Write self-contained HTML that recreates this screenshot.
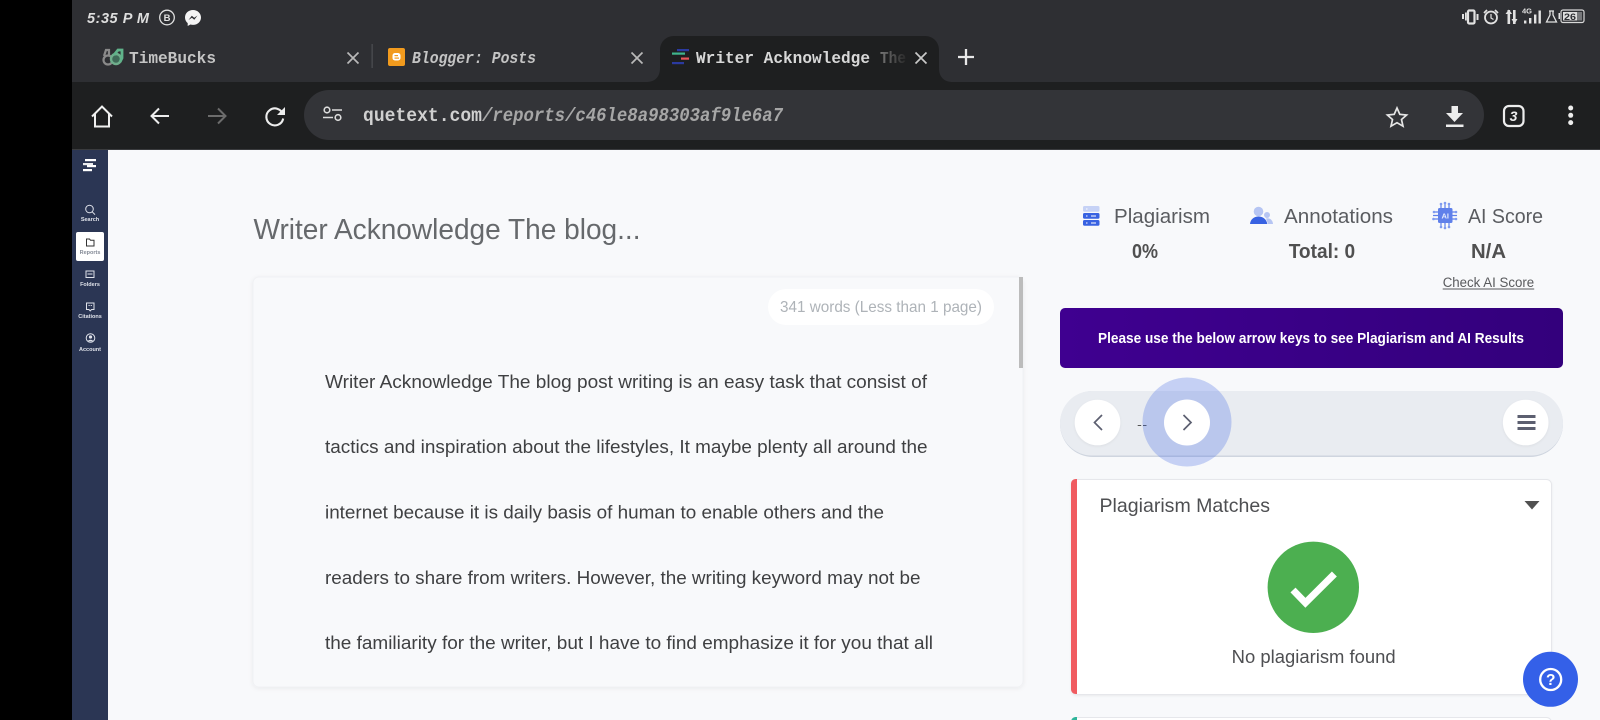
<!DOCTYPE html>
<html lang="en">
<head>
<meta charset="utf-8">
<title>Writer Acknowledge The blog...</title>
<style>
html,body{margin:0;padding:0;background:#000;width:1600px;height:720px;overflow:hidden}
svg{display:block}
text{font-family:"Liberation Sans",sans-serif}
.tab{font-family:"Liberation Mono","Liberation Sans",sans-serif;font-weight:700;font-size:17px;fill:#c4c4c4}
.side{font-size:5.5px;fill:#e0e3ea;text-anchor:middle;font-weight:700}
.stat{font-size:20.5px;fill:#5a5c60}
.val{font-size:20px;font-weight:700;fill:#505050}
.body{font-size:18.5px;fill:#3f4042}
</style>
</head>
<body>
<svg width="1600" height="720" viewBox="0 0 1600 720" xmlns="http://www.w3.org/2000/svg">
<defs>
<linearGradient id="fade" gradientUnits="userSpaceOnUse" x1="872" x2="906" y1="0" y2="0">
<stop offset="0" stop-color="#8d8d8d"/><stop offset="1" stop-color="#2a2a2a"/>
</linearGradient>
<linearGradient id="ban" x1="0" x2="1" y1="0" y2="0">
<stop offset="0" stop-color="#3f0090"/><stop offset="1" stop-color="#33007c"/>
</linearGradient>
<filter id="sh" x="-5%" y="-5%" width="110%" height="110%">
<feDropShadow dx="0" dy="1" stdDeviation="2" flood-color="#000" flood-opacity=".06"/>
</filter>
<filter id="sh2" x="-20%" y="-20%" width="140%" height="140%">
<feDropShadow dx="0" dy="1" stdDeviation="1.200" flood-color="#000" flood-opacity=".06"/>
</filter>
</defs>

<!-- frame -->
<rect width="1600" height="720" fill="#000"/>
<rect x="72" y="0" width="1528" height="82" fill="#2e2f33"/>
<rect x="72" y="82" width="1528" height="67" fill="#1e1f20"/>
<rect x="72" y="149" width="1528" height="1" fill="#3a3b3e"/>
<rect x="108" y="150" width="1492" height="570" fill="#f8f9fb"/>
<rect x="72" y="150" width="36" height="570" fill="#2b3654"/>

<!-- status bar -->
<text x="87" y="23" font-size="14.5" font-weight="700" font-style="italic" fill="#dedede" textLength="62" lengthAdjust="spacing">5:35 P M</text>
<circle cx="167" cy="17.5" r="7.3" fill="none" stroke="#e0e0e0" stroke-width="1.3"/>
<text x="167" y="21" font-size="9.5" font-weight="700" fill="#e0e0e0" text-anchor="middle">B</text>
<path d="M193 10c-4.600 0-8 3.300-8 7.500 0 2.300 1 4.300 2.700 5.600v2.900l2.700-1.500c.8.200 1.700.4 2.600.4 4.600 0 8-3.300 8-7.400s-3.400-7.500-8-7.500z" fill="#f4f4f4"/>
<path d="M188.500 20l3.300-4.200 2.400 2 3.300-2.300-3.200 4.200-2.400-2z" fill="#2e2f33"/>

<!-- right status icons -->
<g fill="#e2e2e2" stroke="none">
<rect x="1468" y="10.500" width="6.500" height="13" rx="1.200" fill="none" stroke="#e2e2e2" stroke-width="2.200"/>
<rect x="1462" y="14" width="2" height="5"/><rect x="1465" y="12.500" width="1.800" height="8"/>
<rect x="1476.500" y="14" width="2" height="6"/>
<circle cx="1491" cy="17.500" r="6" fill="none" stroke="#e2e2e2" stroke-width="1.800"/>
<path d="M1491 14v4l2.500 1.500" fill="none" stroke="#e2e2e2" stroke-width="1.200"/>
<path d="M1484 13l3-3M1498 13l-3-3" fill="none" stroke="#e2e2e2" stroke-width="1.700"/>
<rect x="1507.500" y="10" width="2.600" height="14"/><path d="M1505.500 14l3.300-4.500 3.300 4.500z"/>
<rect x="1513" y="10" width="2.600" height="14"/><path d="M1511.500 19h6l-3 5z"/>
<text x="1522" y="13.500" font-size="7.500" font-weight="700" fill="#e2e2e2">4G</text>
<rect x="1524" y="20.500" width="2.400" height="3"/><rect x="1529" y="18" width="2.400" height="5.500"/><rect x="1534" y="14.500" width="2.400" height="9"/><rect x="1538.500" y="10.500" width="2.400" height="13"/>
<path d="M1549 11h5M1550 11v4l-3.500 7h10l-3.500-7v-4" fill="none" stroke="#e2e2e2" stroke-width="1.300"/>
<rect x="1558.500" y="13" width="1.500" height="6"/>
<rect x="1561" y="10" width="23" height="12.500" rx="2" fill="none" stroke="#d8d8d8" stroke-width="1.200"/>
<rect x="1563" y="12" width="14" height="8.500" fill="#dedede"/>
<rect x="1577" y="12" width="5" height="8.500" fill="#77787b"/>
<text x="1564" y="19.800" font-size="9" font-weight="700" fill="#2e2f33" textLength="12" lengthAdjust="spacingAndGlyphs">26</text>
</g>

<!-- tabs -->
<g fill="none">
<circle cx="108" cy="60" r="4.500" stroke="#8a8a8a" stroke-width="2.200"/>
<path d="M104 56l2-6h3v6" stroke="#8a8a8a" stroke-width="2.200"/>
<circle cx="116" cy="59" r="5" stroke="#6fae8c" stroke-width="2.400" fill="#3f6a58"/>
<path d="M114 55l4-5h4v8l-2 4" stroke="#5fb38a" stroke-width="2.800"/>
</g>
<text class="tab" x="129" y="63" textLength="87" lengthAdjust="spacingAndGlyphs">TimeBucks</text>
<path d="M347.500 52.500l11 11m0-11l-11 11" stroke="#b9b9b9" stroke-width="1.700" fill="none"/>
<rect x="371.500" y="44" width="1.300" height="24" fill="#4b4c50"/>
<rect x="388" y="48" width="17" height="18" rx="2" fill="#f29b1e"/>
<rect x="392.500" y="53" width="8" height="7.500" rx="2.500" fill="#fff"/>
<rect x="394.500" y="55" width="3.500" height="1.200" fill="#f29b1e"/><rect x="394.500" y="57.500" width="4.500" height="1.200" fill="#f29b1e"/>
<text class="tab" x="412" y="63" textLength="124" lengthAdjust="spacingAndGlyphs" font-style="italic">Blogger: Posts</text>
<path d="M631.500 52.500l11 11m0-11l-11 11" stroke="#b9b9b9" stroke-width="1.700" fill="none"/>

<!-- active tab -->
<path d="M646 82c9 0 14-5 14-14V50c0-8 6-14 14-14h251c8 0 14 6 14 14v18c0 9 5 14 14 14z" fill="#1e1f20"/>
<rect x="677" y="49" width="12" height="2.200" fill="#2b3aa0"/>
<rect x="672" y="52.500" width="13" height="2.200" fill="#3fb58c"/>
<rect x="681" y="57.500" width="8" height="2.200" fill="#e8555a"/>
<rect x="672" y="62" width="12" height="2.200" fill="#2b3aa0"/>
<text class="tab" x="696" y="63" textLength="174" lengthAdjust="spacingAndGlyphs" style="fill:#d8d8d8">Writer Acknowledge</text>
<text x="880" y="63" font-size="17" font-weight="700" fill="url(#fade)" textLength="26" lengthAdjust="spacingAndGlyphs" style="font-family:'Liberation Mono',monospace">The</text>
<path d="M915.500 52.500l11 11m0-11l-11 11" stroke="#c9c9c9" stroke-width="1.700" fill="none"/>
<path d="M966 49v16M958 57h16" stroke="#e8e8e8" stroke-width="2.300" fill="none"/>

<!-- toolbar -->
<path d="M92 116.500L102 106.500l10 10M95 114v12.500h14V114" fill="none" stroke="#f0f0f0" stroke-width="2"/>
<path d="M169 116h-17M159 108.500l-7.500 7.500 7.500 7.500" fill="none" stroke="#ededed" stroke-width="2"/>
<path d="M208 116h17M218 108.500l7.500 7.500-7.500 7.500" fill="none" stroke="#6c6c6c" stroke-width="2"/>
<path d="M283 114.500a8.500 8.500 0 1 0 .2 4" fill="none" stroke="#ededed" stroke-width="2.100"/>
<path d="M285 107v8h-8z" fill="#ededed"/>
<rect x="304" y="90" width="1180" height="50" rx="25" fill="#333438"/>
<g fill="none" stroke="#dcdcdc" stroke-width="1.600">
<circle cx="327" cy="110" r="2.800"/><path d="M332 110h10M323 117.500h10"/><circle cx="338" cy="117.500" r="2.800"/>
</g>
<text x="363" y="121" font-size="19" font-weight="700" fill="#d0d0d0" textLength="119" lengthAdjust="spacingAndGlyphs" style="font-family:'Liberation Mono',monospace">quetext.com</text>
<text x="482" y="121" font-size="19" font-weight="700" fill="#a6a6a6" textLength="301" lengthAdjust="spacingAndGlyphs" font-style="italic" style="font-family:'Liberation Mono',monospace">/reports/c46le8a98303af9le6a7</text>
<path d="M1397 108l2.800 6.300 6.800.7-5.100 4.500 1.500 6.700-6-3.500-6 3.500 1.500-6.700-5.100-4.500 6.800-.7z" fill="none" stroke="#e6e6e6" stroke-width="1.700"/>
<path d="M1451.500 106h6.500v7h5l-8.500 9-8.500-9h5.500z" fill="#ededed"/>
<rect x="1446" y="124.500" width="17.500" height="2.500" fill="#ededed"/>
<rect x="1504" y="106" width="19.500" height="20" rx="5" fill="none" stroke="#ededed" stroke-width="2.200"/>
<text x="1513.500" y="121" font-size="14" font-weight="700" font-style="italic" fill="#ededed" text-anchor="middle">3</text>
<circle cx="1570.700" cy="108" r="2.500" fill="#ededed"/><circle cx="1570.700" cy="115.300" r="2.500" fill="#ededed"/><circle cx="1570.700" cy="122.600" r="2.500" fill="#ededed"/>

<!-- sidebar -->
<g fill="#fff">
<rect x="85" y="159" width="11" height="2.200"/><rect x="83" y="163" width="10" height="2.200" opacity=".9"/>
<rect x="87" y="165" width="9" height="2.200"/><rect x="83" y="169" width="9" height="2.200"/>
</g>
<circle cx="89.500" cy="209" r="3.800" fill="none" stroke="#dfe2ea" stroke-width="1"/>
<path d="M92.200 211.800l2.800 2.800" stroke="#dfe2ea" stroke-width="1"/>
<text class="side" x="90" y="221">Search</text>
<rect x="76" y="232" width="28" height="29" rx="2" fill="#fff"/>
<path d="M86.500 239h3l1 1.200h3.500v5.800h-7.500z" fill="none" stroke="#333" stroke-width="1"/>
<text class="side" x="90" y="254" style="fill:#858b97">Reports</text>
<rect x="86" y="271" width="8" height="6.500" fill="none" stroke="#dfe2ea" stroke-width="1"/><path d="M87.500 274h5" stroke="#dfe2ea" stroke-width="1"/>
<text class="side" x="90" y="286">Folders</text>
<path d="M86.500 303h7.500v6.500h-2.500l-1.300 1.400-1.300-1.400h-2.400z" fill="none" stroke="#dfe2ea" stroke-width="1"/><path d="M88.500 305.500h1.200M90.700 305.500h1.200" stroke="#dfe2ea" stroke-width="1"/>
<text class="side" x="90" y="318">Citations</text>
<circle cx="90.500" cy="338" r="4.300" fill="none" stroke="#dfe2ea" stroke-width="1"/><circle cx="90.500" cy="337" r="1.600" fill="#dfe2ea"/><path d="M87.800 341.200c.6-2 4.800-2 5.400 0z" fill="#dfe2ea"/>
<text class="side" x="90" y="351">Account</text>

<!-- title -->
<text x="253.500" y="239" font-size="29" fill="#66696c" textLength="387" lengthAdjust="spacingAndGlyphs">Writer Acknowledge The blog...</text>

<!-- text panel -->
<rect x="253" y="277" width="770" height="410" rx="6" fill="#f8f9fb" stroke="#f0f1f4" stroke-width="1" filter="url(#sh)"/>
<rect x="1019" y="277" width="4" height="91" fill="#bcbcbc"/>
<rect x="768" y="289" width="226" height="36" rx="18" fill="#fff"/>
<text x="780" y="312" font-size="16" fill="#aeb3b8" textLength="202" lengthAdjust="spacingAndGlyphs">341 words (Less than 1 page)</text>
<text class="body" x="325" y="388" textLength="602" lengthAdjust="spacingAndGlyphs">Writer Acknowledge The blog post writing is an easy task that consist of</text>
<text class="body" x="325" y="453" textLength="602.500" lengthAdjust="spacingAndGlyphs">tactics and inspiration about the lifestyles, It maybe plenty all around the</text>
<text class="body" x="325" y="518.500" textLength="559" lengthAdjust="spacingAndGlyphs">internet because it is daily basis of human to enable others and the</text>
<text class="body" x="325" y="584" textLength="595.500" lengthAdjust="spacingAndGlyphs">readers to share from writers. However, the writing keyword may not be</text>
<text class="body" x="325" y="649" textLength="608" lengthAdjust="spacingAndGlyphs">the familiarity for the writer, but I have to find emphasize it for you that all</text>

<!-- stats -->
<rect x="1083" y="206" width="16.500" height="5.800" rx="1.500" fill="#c6d2f6"/>
<rect x="1083" y="213" width="16.500" height="5.800" rx="1.500" fill="#3862e2"/>
<rect x="1083" y="220" width="16.500" height="5.800" rx="1.500" fill="#3862e2"/>
<path d="M1086 209h1.500M1086 216h1.500M1086 223h1.500M1091 216h5M1091 223h5" stroke="#fff" stroke-width="1"/>
<text class="stat" x="1114" y="223" textLength="96" lengthAdjust="spacingAndGlyphs">Plagiarism</text>

<circle cx="1258.500" cy="211.500" r="4.800" fill="#b6c5f3"/>
<circle cx="1267" cy="215" r="3" fill="#b6c5f3"/>
<path d="M1266 218.500c4-1 6.800 2 7 5.500h-5z" fill="#b6c5f3"/>
<path d="M1250 224c.5-4.800 4-7.500 8.500-7.500s8 2.700 8.800 7.500z" fill="#3862e2"/>
<text class="stat" x="1284" y="223" textLength="109" lengthAdjust="spacingAndGlyphs">Annotations</text>

<g stroke="#5f80ea" stroke-width="1.200" fill="none">
<path d="M1441 208v-4M1445 208v-5M1449 208v-4M1441 223v4M1445 223v5M1449 223v4M1438 212h-4M1438 215.500h-5M1438 219h-4M1452 212h4M1452 215.500h5M1452 219h4"/>
</g>
<rect x="1438" y="208" width="14.500" height="15" rx="1.500" fill="#5f80ea"/>
<g fill="#7f9bf0"><circle cx="1441" cy="204" r="1.300"/><circle cx="1449" cy="204" r="1.300"/><circle cx="1445" cy="203" r="1.300"/><circle cx="1441" cy="227" r="1.300"/><circle cx="1449" cy="227" r="1.300"/><circle cx="1445" cy="228" r="1.300"/><circle cx="1434" cy="212" r="1.300"/><circle cx="1433.500" cy="219" r="1.300"/><circle cx="1456" cy="212" r="1.300"/><circle cx="1456" cy="219" r="1.300"/></g>
<text x="1445.200" y="218.500" font-size="7.500" font-weight="700" fill="#e8edfd" text-anchor="middle">AI</text>
<text class="stat" x="1468" y="223" textLength="75" lengthAdjust="spacingAndGlyphs">AI Score</text>

<text class="val" x="1132" y="258" textLength="26" lengthAdjust="spacingAndGlyphs">0%</text>
<text class="val" x="1288.700" y="258" textLength="66.500" lengthAdjust="spacingAndGlyphs">Total: 0</text>
<text class="val" x="1471" y="258" textLength="35" lengthAdjust="spacingAndGlyphs">N/A</text>
<text x="1442.700" y="287" font-size="13.500" fill="#58595c" textLength="91.500" lengthAdjust="spacingAndGlyphs">Check AI Score</text>
<rect x="1442.700" y="288.500" width="91.500" height="1" fill="#58595c"/>

<!-- banner -->
<rect x="1060" y="308" width="503" height="60" rx="5" fill="url(#ban)"/>
<text x="1098" y="343" font-size="14.500" font-weight="700" fill="#fff" textLength="426" lengthAdjust="spacingAndGlyphs">Please use the below arrow keys to see Plagiarism and AI Results</text>

<!-- nav pill -->
<rect x="1060" y="391" width="503" height="66" rx="33" fill="#cfd5df"/>
<rect x="1060" y="391" width="503" height="64.500" rx="32" fill="#e9ecf1"/>
<rect x="1137.700" y="425" width="3.500" height="1" fill="#555"/><rect x="1143" y="425" width="3.500" height="1" fill="#555"/>
<circle cx="1187" cy="422" r="44.500" fill="#3a62e0" fill-opacity=".27"/>
<circle cx="1097.500" cy="422.500" r="22.800" fill="#fff" filter="url(#sh2)"/>
<circle cx="1187" cy="422.500" r="23" fill="#fff"/>
<circle cx="1525.700" cy="422.500" r="22.800" fill="#fff" filter="url(#sh2)"/>
<path d="M1102 415l-7.500 7.500 7.500 7.500" fill="none" stroke="#5c5f70" stroke-width="1.700"/>
<path d="M1183.500 415l7.500 7.500-7.500 7.500" fill="none" stroke="#5c5f70" stroke-width="1.700"/>
<rect x="1517.500" y="415" width="18" height="3" fill="#5c5f70"/><rect x="1517.500" y="421" width="18" height="3" fill="#5c5f70"/><rect x="1517.500" y="427" width="18" height="3" fill="#5c5f70"/>

<!-- card -->
<rect x="1071.500" y="479.500" width="480" height="215" rx="5" fill="#fff" stroke="#e6e7eb" stroke-width="1" filter="url(#sh2)"/>
<path d="M1077 479h-1c-3 0-5 2-5 5v205c0 3 2 5 5 5h1z" fill="#f05b60"/>
<text x="1099.500" y="512" font-size="19.500" fill="#4e4f52" textLength="170.500" lengthAdjust="spacingAndGlyphs">Plagiarism Matches</text>
<path d="M1524.500 501h15l-7.500 8.500z" fill="#515151"/>
<circle cx="1313.300" cy="587.300" r="45.700" fill="#4caf50"/>
<path d="M1293 590l12.400 12.800 29-28.800" fill="none" stroke="#fff" stroke-width="7"/>
<text x="1231.700" y="663" font-size="18" fill="#4e4f52" textLength="164" lengthAdjust="spacingAndGlyphs">No plagiarism found</text>

<!-- next card -->
<rect x="1071.500" y="717.500" width="480" height="20" rx="5" fill="#fff" stroke="#e6e7eb"/>
<path d="M1077 717h-1c-3 0-5 2-5 5v10h6z" fill="#2fb59a"/>

<!-- help -->
<circle cx="1550.500" cy="679.300" r="27.500" fill="#3460e8"/>
<circle cx="1550.700" cy="679.500" r="10.500" fill="none" stroke="#fff" stroke-width="2.300"/>
<text x="1550.700" y="685" font-size="15.500" font-weight="700" fill="#fff" text-anchor="middle">?</text>
</svg>
</body>
</html>
